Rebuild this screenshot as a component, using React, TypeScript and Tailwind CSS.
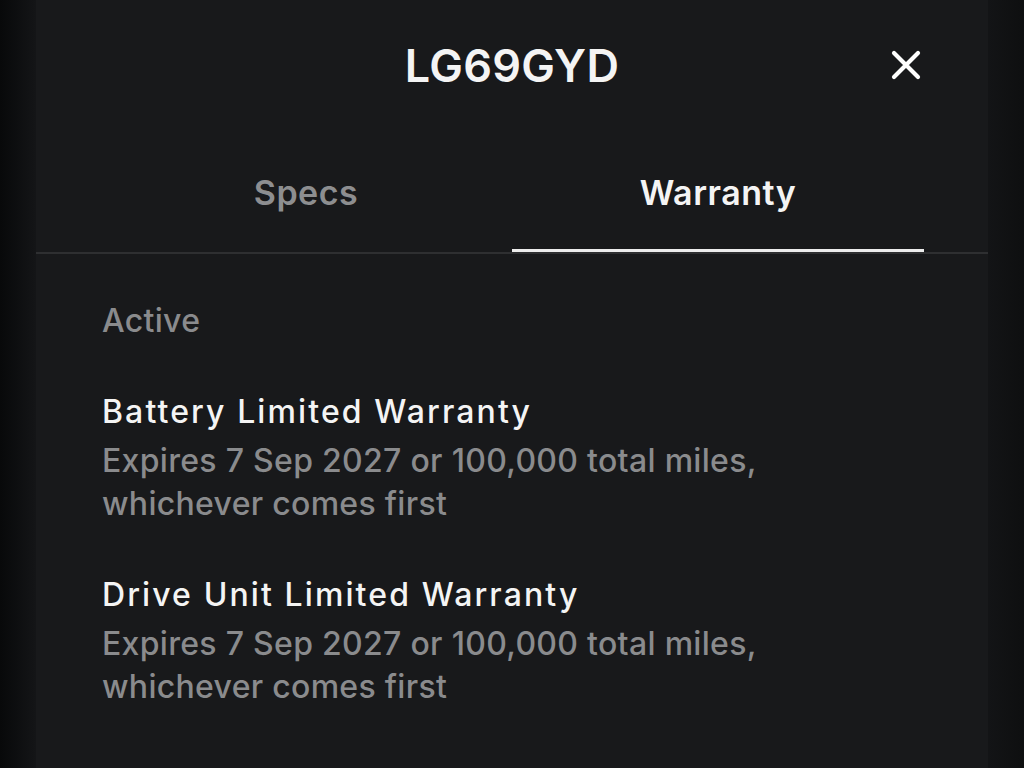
import React from "react";

const font = { fontFamily: "Inter, 'Noto Sans', sans-serif" };

type Item = { title: string; lines: string[] };

const items: Item[] = [
  {
    title: "Battery Limited Warranty",
    lines: ["Expires 7 Sep 2027 or 100,000 total miles,", "whichever comes first"],
  },
  {
    title: "Drive Unit Limited Warranty",
    lines: ["Expires 7 Sep 2027 or 100,000 total miles,", "whichever comes first"],
  },
];

function CloseIcon() {
  return (
    <svg width="30" height="30" viewBox="0 0 30 30" fill="none">
      <path d="M3 3 L27 27 M27 3 L3 27" stroke="#ffffff" strokeWidth="4.2" strokeLinecap="round" />
    </svg>
  );
}

export default function App() {
  return (
    <div className="flex h-[768px] w-full overflow-hidden bg-[#121315]" style={font}>
      <div className="w-[36px] bg-gradient-to-r from-[#08090a] to-[#141517]" />
      <div className="flex flex-1 flex-col bg-[#18191b]">
        {/* header */}
        <div className="grid h-[130px] grid-cols-[1fr_auto_1fr] items-center px-[64px]">
          <div />
          <h1 className="text-[45px] font-semibold leading-none tracking-[0.3px] text-[#f4f4f4]">LG69GYD</h1>
          <div className="flex justify-end">
            <button className="flex h-[36px] w-[36px] items-center justify-center">
              <CloseIcon />
            </button>
          </div>
        </div>

        {/* tabs */}
        <div className="flex px-[64px]">
          <div className="flex h-[122px] flex-1 items-center justify-center border-b-[3px] border-transparent pt-[6px] text-[34px] font-semibold tracking-[0.5px] text-[#8d8e90]">
            Specs
          </div>
          <div className="flex h-[122px] flex-1 items-center justify-center border-b-[3px] border-[#ececec] pt-[6px] text-[34px] font-semibold tracking-[0.5px] text-[#f4f4f4]">
            Warranty
          </div>
        </div>
        <div className="h-[2px] bg-[#2e2f31]" />

        {/* list */}
        <div className="flex flex-col px-[66px] pt-[49px]">
          <div className="text-[32px] font-medium leading-[36px] tracking-[0.3px] text-[#8a8b8d]">Active</div>
          <div className="mt-[53px] flex flex-col gap-[50px]">
            {items.map((it) => (
              <div key={it.title} className="flex flex-col">
                <div className="text-[32px] font-[550] leading-[40px] tracking-[2.1px] text-[#f4f4f4]">{it.title}</div>
                <div className="mt-[7px] text-[32px] font-medium leading-[43px] tracking-[0.3px] text-[#8a8b8d]">
                  {it.lines.map((l) => (
                    <div key={l}>{l}</div>
                  ))}
                </div>
              </div>
            ))}
          </div>
        </div>
      </div>
      <div className="w-[36px] bg-gradient-to-l from-[#0e0f10] to-[#131416]" />
    </div>
  );
}
